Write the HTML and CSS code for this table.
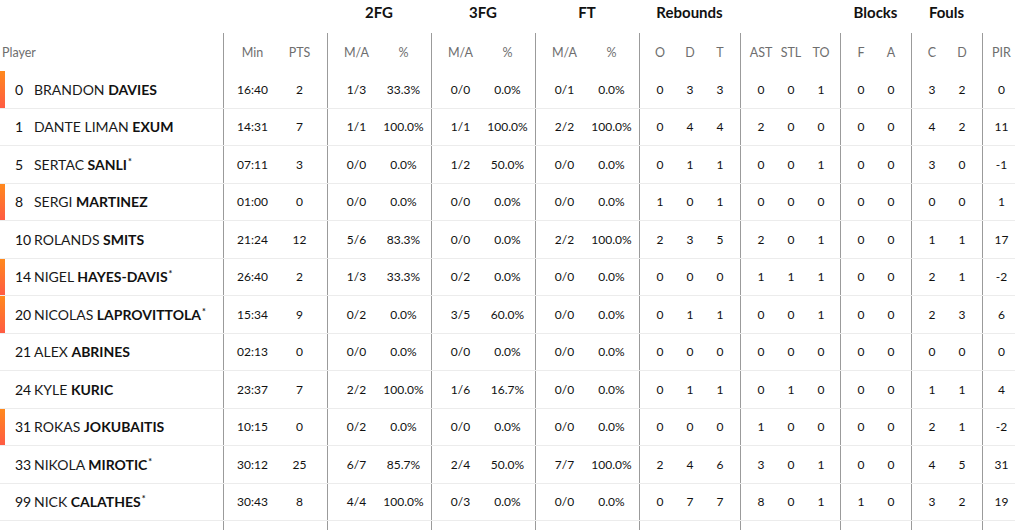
FILE: index.html
```html
<!DOCTYPE html>
<html lang="en">
<head>
<meta charset="utf-8">
<title>Box score</title>
<link rel="stylesheet" href="styles.css">
</head>
<body>
<div class="box">
  <div class="row head1">
    <div class="player"></div>
    <div class="grp g104 t"><span class="glabel">&nbsp;</span></div>
    <div class="grp g104 t"><span class="glabel">2FG</span></div>
    <div class="grp g104 t"><span class="glabel">3FG</span></div>
    <div class="grp g104 t"><span class="glabel">FT</span></div>
    <div class="grp g101 t"><span class="glabel">Rebounds</span></div>
    <div class="grp g100 t"><span class="glabel">&nbsp;</span></div>
    <div class="grp g71 t"><span class="glabel">Blocks</span></div>
    <div class="grp g71 t"><span class="glabel">Fouls</span></div>
    <div class="grp g33 t"><span class="glabel">&nbsp;</span></div>
  </div>
  <div class="row head2">
    <div class="player"><span class="hlabel">Player</span></div>
    <div class="grp pr4"><span class="c47">Min</span><span class="c47">PTS</span></div>
    <div class="grp pr4"><span class="c47">M/A</span><span class="c47">%</span></div>
    <div class="grp pr4"><span class="c47">M/A</span><span class="c47">%</span></div>
    <div class="grp pr4"><span class="c47">M/A</span><span class="c47">%</span></div>
    <div class="grp pr5"><span class="c30">O</span><span class="c30">D</span><span class="c30">T</span></div>
    <div class="grp pr4"><span class="c30">AST</span><span class="c30">STL</span><span class="c30">TO</span></div>
    <div class="grp pr5"><span class="c30">F</span><span class="c30">A</span></div>
    <div class="grp pr5"><span class="c30">C</span><span class="c30">D</span></div>
    <div class="grp pr0"><span class="c27">PIR</span></div>
  </div>
  <div id="rows"></div>
  <div class="row data filler">
    <div class="player"></div>
    <div class="grp pr4"><span class="c47"></span><span class="c47"></span></div>
    <div class="grp pr4"><span class="c47"></span><span class="c47"></span></div>
    <div class="grp pr4"><span class="c47"></span><span class="c47"></span></div>
    <div class="grp pr4"><span class="c47"></span><span class="c47"></span></div>
    <div class="grp pr5"><span class="c30"></span><span class="c30"></span><span class="c30"></span></div>
    <div class="grp pr4"><span class="c30"></span><span class="c30"></span><span class="c30"></span></div>
    <div class="grp pr5"><span class="c30"></span><span class="c30"></span></div>
    <div class="grp pr5"><span class="c30"></span><span class="c30"></span></div>
    <div class="grp pr0"><span class="c27"></span></div>
  </div>
</div>
<script src="app.js"></script>
</body>
</html>
```
FILE: app.js
```js
var players = [
  ["0","BRANDON","DAVIES",0,1,"16:40","2","1/3","33.3%","0/0","0.0%","0/1","0.0%","0","3","3","0","0","1","0","0","3","2","0"],
  ["1","DANTE LIMAN","EXUM",0,0,"14:31","7","1/1","100.0%","1/1","100.0%","2/2","100.0%","0","4","4","2","0","0","0","0","4","2","11"],
  ["5","SERTAC","SANLI",1,0,"07:11","3","0/0","0.0%","1/2","50.0%","0/0","0.0%","0","1","1","0","0","1","0","0","3","0","-1"],
  ["8","SERGI","MARTINEZ",0,1,"01:00","0","0/0","0.0%","0/0","0.0%","0/0","0.0%","1","0","1","0","0","0","0","0","0","0","1"],
  ["10","ROLANDS","SMITS",0,0,"21:24","12","5/6","83.3%","0/0","0.0%","2/2","100.0%","2","3","5","2","0","1","0","0","1","1","17"],
  ["14","NIGEL","HAYES-DAVIS",1,1,"26:40","2","1/3","33.3%","0/2","0.0%","0/0","0.0%","0","0","0","1","1","1","0","0","2","1","-2"],
  ["20","NICOLAS","LAPROVITTOLA",1,1,"15:34","9","0/2","0.0%","3/5","60.0%","0/0","0.0%","0","1","1","0","0","1","0","0","2","3","6"],
  ["21","ALEX","ABRINES",0,0,"02:13","0","0/0","0.0%","0/0","0.0%","0/0","0.0%","0","0","0","0","0","0","0","0","0","0","0"],
  ["24","KYLE","KURIC",0,0,"23:37","7","2/2","100.0%","1/6","16.7%","0/0","0.0%","0","1","1","0","1","0","0","0","1","1","4"],
  ["31","ROKAS","JOKUBAITIS",0,1,"10:15","0","0/2","0.0%","0/0","0.0%","0/0","0.0%","0","0","0","1","0","0","0","0","2","1","-2"],
  ["33","NIKOLA","MIROTIC",1,0,"30:12","25","6/7","85.7%","2/4","50.0%","7/7","100.0%","2","4","6","3","0","1","0","0","4","5","31"],
  ["99","NICK","CALATHES",1,0,"30:43","8","4/4","100.0%","0/3","0.0%","0/0","0.0%","0","7","7","8","0","1","1","0","3","2","19"]
];
var groups = [
  ["pr4", ["c47","c47"]],
  ["pr4", ["c47","c47"]],
  ["pr4", ["c47","c47"]],
  ["pr4", ["c47","c47"]],
  ["pr5", ["c30","c30","c30"]],
  ["pr4", ["c30","c30","c30"]],
  ["pr5", ["c30","c30"]],
  ["pr5", ["c30","c30"]],
  ["pr0", ["c27"]]
];
var html = "";
players.forEach(function (p) {
  var h = '<div class="row data">';
  h += '<div class="player' + (p[4] ? ' starter' : '') + '"><span class="num">' + p[0] + '</span>' +
       '<span class="name">' + p[1] + ' <b>' + p[2] + '</b>' + (p[3] ? '<sup>*</sup>' : '') + '</span></div>';
  var i = 5;
  groups.forEach(function (g) {
    h += '<div class="grp ' + g[0] + '">';
    g[1].forEach(function (c) {
      h += '<span class="' + c + '">' + p[i] + '</span>';
      i++;
    });
    h += '</div>';
  });
  h += '</div>';
  html += h;
});
document.getElementById("rows").innerHTML = html;
```
FILE: styles.css
```css
html, body {
  margin: 0;
  padding: 0;
  background: #fff;
  overflow: hidden;
}
body {
  font-family: Lato, "Liberation Sans", sans-serif;
  color: #111;
  width: 1015px;
}
.box {
  width: 1015px;
}
.row {
  display: flex;
}
.player {
  width: 223px;
  flex: none;
  box-sizing: border-box;
  display: flex;
  align-items: center;
}
.grp {
  display: flex;
  align-items: center;
  flex: none;
  border-left: 1px solid #9b9b9b;
  padding-left: 5px;
}
.pr4 { padding-right: 4px; }
.pr5 { padding-right: 5px; }
.pr0 { padding-right: 0; }
.c47, .c30, .c27 {
  display: block;
  text-align: center;
  flex: none;
}
.c47 { width: 47px; }
.c30 { width: 30px; }
.c27 { width: 27px; }

/* group headers */
.head1 {
  height: 33px;
  align-items: flex-start;
}
.head1 .grp {
  border-left: none;
  padding: 0;
  box-sizing: border-box;
  justify-content: center;
  align-items: flex-start;
}
.g104 { width: 104px; }
.g101 { width: 101px; }
.g100 { width: 100px; }
.g71 { width: 71px; }
.g33 { width: 33px; }
.glabel {
  font-weight: 700;
  font-size: 15px;
  line-height: 24px;
  color: #111;
}

/* sub headers */
.head2 {
  height: 38px;
  font-size: 12.5px;
  color: #6e6e6e;
}
.head2 .player, .head2 .grp {
  height: 38px;
}
.hlabel {
  padding-left: 2px;
}

/* data rows */
.data {
  height: 37.5px;
  box-sizing: border-box;
  border-bottom: 1px solid #ececec;
  font-size: 12px;
}
.data .player, .data .grp {
  height: 100%;
}
.data .player {
  padding-left: 15px;
}
.data .player.starter {
  padding-left: 10px;
  border-left: 5px solid #ff7026;
  border-image: linear-gradient(#ff8a1c, #ff5a44) 1;
}
.num {
  width: 19px;
  flex: none;
  font-size: 14px;
}
.name {
  font-size: 14px;
  color: #1a1a1a;
  white-space: nowrap;
}
.name b {
  font-weight: 700;
  color: #111;
}
.name sup {
  font-size: 9px;
  font-weight: 700;
  vertical-align: 5px;
  line-height: 0;
  margin-left: 1px;
}
.filler {
  border-bottom: none;
}
```
